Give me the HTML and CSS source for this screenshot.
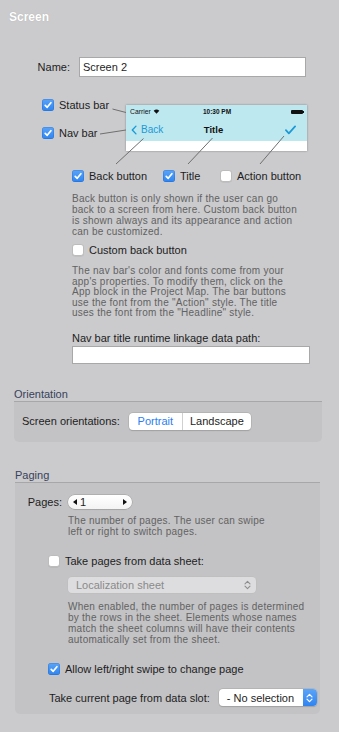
FILE: index.html
```html
<!DOCTYPE html>
<html lang="en">
<head>
<meta charset="utf-8">
<title>Screen</title>
<link rel="stylesheet" href="styles.css">
</head>
<body>
<header class="panel-title">Screen</header>

<div class="name-row">
  <span class="name-label">Name:</span>
  <div class="text-field name-field">Screen 2</div>
</div>

<div class="nav-diagram">
  <div class="bar-toggles">
    <div class="check"><span class="box on"><svg viewBox="0 0 12 12" width="12" height="12"><path d="M3.2 6.3 L5.2 8.3 L8.9 3.7" stroke="#fff" stroke-width="1.7" fill="none" stroke-linecap="round" stroke-linejoin="round"/></svg></span><span>Status bar</span></div>
    <div class="check"><span class="box on"><svg viewBox="0 0 12 12" width="12" height="12"><path d="M3.2 6.3 L5.2 8.3 L8.9 3.7" stroke="#fff" stroke-width="1.7" fill="none" stroke-linecap="round" stroke-linejoin="round"/></svg></span><span>Nav bar</span></div>
  </div>
  <div class="phone">
    <div class="phone-status">
      <span class="carrier">Carrier <svg class="wifi" viewBox="0 0 8 6" width="7" height="5"><path d="M0.6 2.2 A5 5 0 0 1 7.4 2.2 L4 5.8 Z" fill="#111"/></svg></span>
      <span class="clock">10:30 PM</span>
      <span class="battery"><span class="cell"></span><span class="nub"></span></span>
    </div>
    <div class="phone-nav">
      <span class="back"><svg viewBox="0 0 7 11" width="6" height="10"><path d="M5.8 1 L1.5 5.5 L5.8 10" stroke="#1b9ad6" stroke-width="1.6" fill="none" stroke-linecap="round" stroke-linejoin="round"/></svg>Back</span>
      <span class="nav-title">Title</span>
      <span class="action"><svg viewBox="0 0 12 10" width="11" height="10"><path d="M1 5.2 L4.2 8.6 L11 1" stroke="#1b9ad6" stroke-width="1.9" fill="none" stroke-linecap="round" stroke-linejoin="round"/></svg></span>
    </div>
    <div class="phone-body"></div>
  </div>
  <svg class="connectors" viewBox="0 0 339 70" width="339" height="70">
    <g stroke="#6f6f6f" stroke-width="1" fill="none">
      <line x1="112.5" y1="12" x2="126" y2="15.5"/>
      <line x1="100" y1="37" x2="126" y2="33"/>
      <line x1="143.5" y1="41.5" x2="116" y2="67"/>
      <line x1="212.5" y1="41" x2="188" y2="67"/>
      <line x1="284" y1="39" x2="260" y2="67"/>
    </g>
  </svg>
</div>

<div class="element-toggles">
  <div class="check"><span class="box on"><svg viewBox="0 0 12 12" width="12" height="12"><path d="M3.2 6.3 L5.2 8.3 L8.9 3.7" stroke="#fff" stroke-width="1.7" fill="none" stroke-linecap="round" stroke-linejoin="round"/></svg></span><span>Back button</span></div>
  <div class="check"><span class="box on"><svg viewBox="0 0 12 12" width="12" height="12"><path d="M3.2 6.3 L5.2 8.3 L8.9 3.7" stroke="#fff" stroke-width="1.7" fill="none" stroke-linecap="round" stroke-linejoin="round"/></svg></span><span>Title</span></div>
  <div class="check"><span class="box off"></span><span>Action button</span></div>
</div>

<div class="nav-options">
  <p class="hint hint-back">Back button is only shown if the user can go<br>back to a screen from here. Custom back button<br>is shown always and its appearance and action<br>can be customized.</p>
  <div class="check custom-back"><span class="box off"></span><span>Custom back button</span></div>
  <p class="hint hint-font">The nav bar's color and fonts come from your<br>app's properties. To modify them, click on the<br>App block in the Project Map. The bar buttons<br>use the font from the "Action" style. The title<br>uses the font from the "Headline" style.</p>
  <div class="field-label">Nav bar title runtime linkage data path:</div>
  <div class="text-field path-field"></div>
</div>

<section class="group orientation">
  <h2 class="group-title">Orientation</h2>
  <div class="group-body">
    <div class="orient-row">
      <span>Screen orientations:</span>
      <div class="segmented">
        <span class="seg seg-selected">Portrait</span>
        <span class="seg">Landscape</span>
      </div>
    </div>
  </div>
</section>

<section class="group paging">
  <h2 class="group-title">Paging</h2>
  <div class="group-body">
    <div class="pages-row">
      <span class="pages-label">Pages:</span>
      <div class="stepper">
        <svg viewBox="0 0 4 6" width="4" height="6"><path d="M4 0 L0 3 L4 6 Z" fill="#111"/></svg>
        <span class="stepper-value">1</span>
        <svg viewBox="0 0 4 6" width="4" height="6"><path d="M0 0 L4 3 L0 6 Z" fill="#111"/></svg>
      </div>
    </div>
    <p class="hint pages-hint">The number of pages. The user can swipe<br>left or right to switch pages.</p>
    <div class="check sheet-check"><span class="box off"></span><span>Take pages from data sheet:</span></div>
    <div class="popup disabled-popup">
      <span>Localization sheet</span>
      <svg viewBox="0 0 7 10" width="7" height="10"><path d="M1 3.8 L3.5 1.3 L6 3.8 M1 6.2 L3.5 8.7 L6 6.2" stroke="#8e8e8e" stroke-width="1.1" fill="none" stroke-linecap="round" stroke-linejoin="round"/></svg>
    </div>
    <p class="hint sheet-hint">When enabled, the number of pages is determined<br>by the rows in the sheet. Elements whose names<br>match the sheet columns will have their contents<br>automatically set from the sheet.</p>
    <div class="check swipe-check"><span class="box on"><svg viewBox="0 0 12 12" width="12" height="12"><path d="M3.2 6.3 L5.2 8.3 L8.9 3.7" stroke="#fff" stroke-width="1.7" fill="none" stroke-linecap="round" stroke-linejoin="round"/></svg></span><span>Allow left/right swipe to change page</span></div>
    <div class="slot-row">
      <span>Take current page from data slot:</span>
      <div class="popup slot-popup">
        <span class="slot-text">- No selection</span>
        <span class="slot-arrows"><svg viewBox="0 0 7 10" width="7" height="10"><path d="M1 3.8 L3.5 1.3 L6 3.8 M1 6.2 L3.5 8.7 L6 6.2" stroke="#fff" stroke-width="1.2" fill="none" stroke-linecap="round" stroke-linejoin="round"/></svg></span>
      </div>
    </div>
  </div>
</section>
</body>
</html>
```

FILE: styles.css
```css
* { box-sizing: border-box; }

html, body {
  margin: 0;
  padding: 0;
}

body {
  width: 339px;
  height: 732px;
  overflow: hidden;
  background: #cbcbcd;
  font-family: "Liberation Sans", Arial, sans-serif;
  font-size: 11px;
  color: #1d1d1d;
}

.panel-title {
  padding: 10px 9px 0;
  line-height: 14px;
  font-size: 12px;
  font-weight: bold;
  color: #ffffff;
  text-shadow: 0 0 1px rgba(0, 0, 0, 0.2);
}

.name-row {
  display: flex;
  align-items: center;
  margin-top: 33px;
  height: 20px;
}

.name-label {
  width: 70px;
  text-align: right;
  margin-right: 9px;
}

.text-field {
  background: #ffffff;
  border: 1px solid #a8a8a8;
  padding: 0 3px;
  line-height: 18px;
}

.name-field {
  width: 227px;
  height: 20px;
}

/* checkboxes */
.check {
  display: flex;
  align-items: center;
  gap: 5px;
  height: 12px;
  white-space: nowrap;
}

.box {
  width: 12px;
  height: 12px;
  border-radius: 3px;
  flex: none;
  display: flex;
  align-items: center;
  justify-content: center;
}

.box.on {
  background: linear-gradient(#5ba4f8, #2e84f0);
  box-shadow: inset 0 0 0 0.5px rgba(0, 60, 160, 0.35);
}

.box.off {
  background: #ffffff;
  border: 1px solid #bcbcbc;
  box-shadow: 0 0.5px 0.5px rgba(0, 0, 0, 0.1);
}

/* nav diagram */
.nav-diagram {
  position: relative;
  display: flex;
  margin-top: 20px;
  height: 67px;
}

.bar-toggles {
  width: 126px;
  padding-left: 42px;
  display: flex;
  flex-direction: column;
  gap: 12px;
}

.bar-toggles .check {
  height: 16px;
}

.phone {
  margin-top: 8px;
  width: 181px;
  height: 46px;
  background: #ffffff;
  box-shadow: 0 0 2px rgba(0, 0, 0, 0.35);
  display: flex;
  flex-direction: column;
}

.phone-status {
  height: 13px;
  background: #bde8ef;
  display: grid;
  grid-template-columns: 1fr auto 1fr;
  align-items: center;
  padding: 0 3px 0 4px;
  font-size: 6.8px;
  color: #111;
}

.carrier {
  display: flex;
  align-items: center;
  gap: 2px;
}

.clock {
  font-weight: bold;
  font-size: 6.5px;
}

.battery {
  justify-self: end;
  display: flex;
  align-items: center;
}

.battery .cell {
  width: 12px;
  height: 4px;
  background: #111;
  border-radius: 1px;
}

.battery .nub {
  width: 1px;
  height: 2px;
  background: #111;
}

.phone-nav {
  height: 23px;
  background: #bde8ef;
  display: grid;
  grid-template-columns: 1fr auto 1fr;
  align-items: center;
  padding: 0 11px 0 5px;
}

.back {
  display: flex;
  align-items: center;
  gap: 4px;
  color: #1b9ad6;
  font-size: 10px;
}

.nav-title {
  font-weight: bold;
  font-size: 9.5px;
  color: #111;
}

.action {
  justify-self: end;
  display: flex;
}

.phone-body {
  flex: 1;
  background: #ffffff;
}

.connectors {
  position: absolute;
  left: 0;
  top: 0;
}

.element-toggles {
  display: grid;
  grid-template-columns: 91px 57px auto;
  padding-left: 72px;
  margin-top: 6px;
}

.nav-options {
  padding-left: 72px;
}

.hint {
  margin: 0;
  font-size: 10px;
  letter-spacing: 0.25px;
  color: #626262;
  line-height: 11px;
  white-space: nowrap;
}

.hint-back {
  margin-top: 11px;
}

.custom-back {
  margin-top: 7px;
}

.hint-font {
  margin-top: 10px;
  line-height: 10.5px;
}

.field-label {
  margin-top: 12px;
  line-height: 14px;
}

.path-field {
  margin-top: 1px;
  width: 238px;
  height: 18px;
}

/* groups */
.group-title {
  margin: 0;
  font-size: 11px;
  font-weight: normal;
  line-height: 14px;
  color: #38425b;
  border-bottom: 1px solid #a7a7a9;
}

.group-body {
  background: #c3c3c5;
  border-radius: 0 0 5px 5px;
}

.orientation {
  margin: 23px 17px 0 14px;
}

.orientation .group-body {
  padding: 11px 0 12px 8px;
}

.orient-row {
  display: flex;
  align-items: center;
  height: 17px;
}

.segmented {
  display: flex;
  margin-left: 9px;
  height: 17px;
  background: #ffffff;
  border-radius: 4px;
  box-shadow: 0 0 0 0.5px #a9a9a9, 0 0.5px 1px rgba(0, 0, 0, 0.2);
}

.seg {
  display: flex;
  align-items: center;
  justify-content: center;
  height: 17px;
  width: 68px;
}

.seg-selected {
  width: 54px;
  color: #2a7ef4;
  border-right: 1px solid #d0d0d0;
}

.paging {
  margin: 26px 19px 0 15px;
}

.paging .group-body {
  padding: 12px 0 8px 0;
}

.pages-row {
  display: flex;
  align-items: center;
  height: 14px;
}

.pages-label {
  width: 47px;
  text-align: right;
  margin-right: 6px;
}

.stepper {
  width: 64px;
  height: 14px;
  border-radius: 7px;
  background: linear-gradient(#ffffff, #f3f3f3);
  box-shadow: 0 0 0 0.5px #9d9d9d, 0 0.5px 1px rgba(0, 0, 0, 0.2);
  display: flex;
  align-items: center;
  padding: 0 5px 0 5px;
}

.stepper-value {
  flex: 1;
  margin-left: 3px;
}

.pages-hint {
  margin-top: 6px;
  padding-left: 53px;
}

.sheet-check {
  margin-top: 18px;
  padding-left: 33px;
}

.popup {
  display: flex;
  align-items: center;
  border-radius: 4px;
}

.disabled-popup {
  margin: 10px 0 0 53px;
  width: 188px;
  height: 16px;
  padding: 0 5px 0 8px;
  justify-content: space-between;
  background: #dddddf;
  box-shadow: 0 0 0 0.5px #bcbcbc;
  color: #8a8a8a;
}

.sheet-hint {
  margin-top: 9.5px;
  padding-left: 53px;
  line-height: 10.9px;
}

.swipe-check {
  margin-top: 17.5px;
  padding-left: 33px;
}

.slot-row {
  display: flex;
  align-items: center;
  margin-top: 14px;
  padding-left: 34px;
  gap: 9px;
  height: 17px;
}

.slot-popup {
  width: 98px;
  height: 17px;
  background: #ffffff;
  box-shadow: 0 0 0 0.5px #a9a9a9, 0 0.5px 1px rgba(0, 0, 0, 0.2);
  overflow: hidden;
}

.slot-text {
  flex: 1;
  padding-left: 8px;
}

.slot-arrows {
  width: 14px;
  height: 17px;
  display: flex;
  align-items: center;
  justify-content: center;
  background: linear-gradient(#5ba4f8, #2e84f0);
}
```
